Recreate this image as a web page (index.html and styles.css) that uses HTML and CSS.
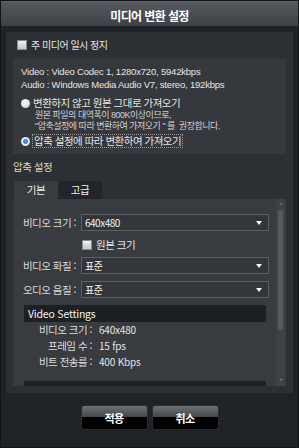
FILE: index.html
```html
<!DOCTYPE html>
<html lang="ko">
<head>
  <meta charset="utf-8" />
  <title>미디어 변환 설정</title>
  <link rel="stylesheet" href="styles.css">
</head>
<body>
  <div class="window">
    <div class="titlebar">미디어 변환 설정</div>

    <div class="panel">
      <div class="check top-check"><span class="box"></span>주 미디어 일시 정지</div>

      <div class="info">
        <div class="src">Video : Video Codec 1, 1280x720, 5942kbps</div>
        <div class="src">Audio : Windows Media Audio V7, stereo, 192kbps</div>
        <div class="radio first"><span class="dot"></span>변환하지 않고 원본 그대로 가져오기</div>
        <div class="note">원본 파일의 대역폭이 800K이상이므로,</div>
        <div class="note">"압축설정에 따라 변환하여 가져오기 " 를 &nbsp;권장합니다.</div>
        <div class="radio on"><span class="dot"></span><span class="focus">압축 설정에 따라 변환하여 가져오기</span></div>
      </div>

      <div class="section">압축 설정</div>

      <div class="tabs">
        <div class="tab active">기본</div>
        <div class="tab">고급</div>
      </div>

      <div class="tabbody">
        <div class="scrollarea">
          <div class="row">
            <span class="label">비디오 크기 :</span>
            <div class="select"><span>640x480</span><i class="arrow"></i></div>
          </div>
          <div class="check orig"><span class="box"></span>원본 크기</div>
          <div class="row r2">
            <span class="label">비디오 화질 :</span>
            <div class="select"><span>표준</span><i class="arrow"></i></div>
          </div>
          <div class="row r3">
            <span class="label">오디오 음질 :</span>
            <div class="select"><span>표준</span><i class="arrow"></i></div>
          </div>

          <div class="group">Video Settings</div>
          <div class="prop"><span class="k">비디오 크기 :</span><span class="v">640x480</span></div>
          <div class="prop"><span class="k">프레임 수 :</span><span class="v">15 fps</span></div>
          <div class="prop"><span class="k">비트 전송률 :</span><span class="v">400 Kbps</span></div>
          <div class="group next"></div>
        </div>
        <div class="scrollbar">
          <i class="up"></i>
          <span class="thumb"></span>
          <i class="down"></i>
        </div>
      </div>
    </div>

    <div class="buttons">
      <button>적용</button>
      <button>취소</button>
    </div>
  </div>
</body>
</html>
```

FILE: styles.css
```css
* { box-sizing:border-box; }
body {
  margin:0; background:#1f2226; color:#e6e6e6;
  font-family:"Noto Sans CJK KR", sans-serif; font-size:10px; letter-spacing:-0.5px;
}
.window { width:299px; height:448px; border:1px solid #121416; background:#1f2226; overflow:hidden; }

.titlebar {
  height:25px; padding-top:3px; display:flex; align-items:center; justify-content:center;
  background:linear-gradient(#565a60, #3d4146);
  border-top:1px solid #5e6268;
  color:#fff; font-size:12px; font-weight:bold; letter-spacing:-0.6px;
}

.panel {
  margin:6px 5px 0; width:287px; height:361px; padding:6px 7px 7px;
  background:#2c2f33; display:flex; flex-direction:column;
}

.check { display:flex; align-items:center; height:14px; line-height:14px; }
.box {
  width:10px; height:10px; margin-right:4px; flex:none;
  background:linear-gradient(#f2f2f2, #c4c4c4); border:1px solid #8a8a8a;
}
.top-check { margin-left:4px; }

.info {
  margin-top:7px; height:95px; padding:6px 8px;
  background:#35383c;
}
.src {
  height:13px; line-height:13px;
  font-family:"Liberation Sans", sans-serif; font-size:9.5px; letter-spacing:-0.2px;
}
.radio { display:flex; align-items:center; height:14px; line-height:14px; font-size:10.5px; }
.radio.first { margin-top:5px; }
.radio.on { margin-top:2px; }
.dot {
  width:9px; height:9px; border-radius:50%; margin-right:3px; flex:none;
  background:radial-gradient(circle at 40% 35%, #fff, #c8c8c8);
}
.radio.on .dot { background:radial-gradient(circle, #3f8fe0 0 2.2px, #f0f0f0 2.7px, #c8c8c8); }
.focus { outline:1px dotted #9a9a9a; padding:0 1px; line-height:12px; }
.note {
  padding-left:14px; height:11px; line-height:11px; color:#d2d2d2;
  font-family:"Liberation Sans", "Noto Sans CJK KR", sans-serif; font-size:9px;
}

.section { margin-top:6px; height:14px; line-height:14px; color:#e3d7ac; font-size:10.5px; }

.tabs { display:flex; margin-top:7px; height:18px; padding-left:1px; }
.tab {
  width:44px; height:18px; line-height:18px; text-align:center;
  background:#222529; color:#f0f0f0; font-size:10.5px;
}
.tab.active { background:#383b3f; }

.tabbody { display:flex; height:187px; background:#383b3f; }
.scrollarea { flex:1; overflow:hidden; padding-top:15px; }

.row { display:flex; align-items:center; height:17px; }
.row.r2 { margin-top:5px; }
.row.r3 { margin-top:7px; }
.label { width:63px; text-align:right; color:#dcdcdc; font-size:10.5px; }
.select {
  margin-left:5px; width:188px; height:17px; padding:0 6px 0 3px;
  display:flex; align-items:center; justify-content:space-between;
  background:#323539; border:1px solid #5c5f63; color:#f2f2f2;
}
.arrow {
  width:0; height:0; border-left:3px solid transparent; border-right:3px solid transparent;
  border-top:4px solid #fff;
}
.check.orig { margin:7px 0 0 69px; font-size:10.5px; }

.group {
  margin:7px 0 0 11px; width:242px; height:17px; line-height:17px; padding-left:4px;
  background:#1d2023; color:#f2f2f2; letter-spacing:-0.2px; font-size:10.5px;
}
.group.next { margin-top:11px; }
.prop { display:flex; margin-left:11px; height:16px; line-height:16px; }
.prop .k { width:68px; text-align:right; color:#dcdcdc; font-size:10.5px; }
.prop .v { margin-left:7px; letter-spacing:-0.2px; }

.scrollbar {
  width:9px; margin-right:1px; background:#3e4145;
  display:flex; flex-direction:column; align-items:center;
}
.scrollbar .up, .scrollbar .down {
  width:0; height:0; border-left:2px solid transparent; border-right:2px solid transparent;
}
.scrollbar .up { margin-top:4px; border-bottom:2px solid #6a6d71; }
.scrollbar .down { margin-top:auto; margin-bottom:5px; border-top:2px solid #7a7d81; }
.thumb { width:5px; height:120px; margin-top:5px; background:#55585c; border-radius:2px; }

.buttons { display:flex; justify-content:center; gap:4px; margin-top:12px; }
.buttons button {
  width:67px; height:25px; padding:0; border:1px solid #2c2e30; border-radius:3px;
  background:linear-gradient(#6d7073 0%, #45474a 47%, #000 50%, #000 100%);
  color:#fff; font-family:inherit; font-size:11px; font-weight:bold; letter-spacing:-0.5px;
  cursor:pointer;
}
```
